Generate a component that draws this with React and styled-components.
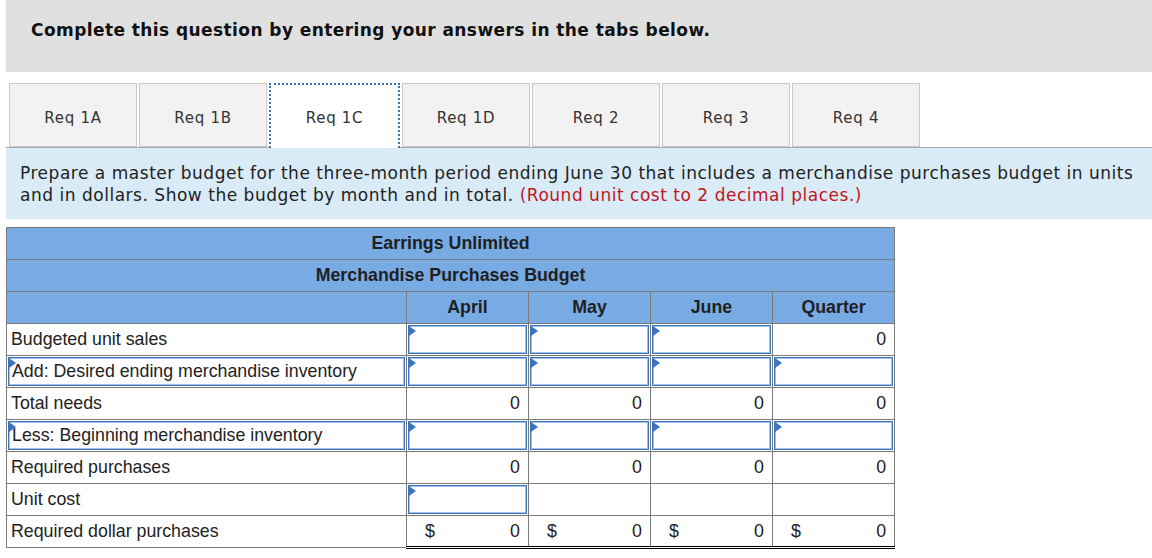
import React from "react";
import styled, { createGlobalStyle } from "styled-components";

const Global = createGlobalStyle`
  html, body { margin: 0; padding: 0; background: #fff; }
  body { font-family: "DejaVu Sans", Verdana, sans-serif; }
`;

const Page = styled.div`
  padding-left: 6px;
  width: 1146px;
`;

const TopBar = styled.div`
  height: 72px;
  background: #e0e0e0;
  display: flex;
  align-items: flex-start;
  padding: 19px 0 0 25px;
  box-sizing: border-box;
`;

const TopTitle = styled.h1`
  margin: 0;
  font-family: "DejaVu Sans", Verdana, sans-serif;
  font-weight: bold;
  font-size: 17px;
  line-height: 22px;
  color: #111;
  letter-spacing: 0.42px;
`;

const TabRow = styled.div`
  margin-top: 11px;
  display: flex;
  align-items: flex-end;
  gap: 2px;
  padding-left: 3px;
  border-bottom: 1px solid #a8a8a8;
  height: 64px;
`;

const Tab = styled.div`
  width: ${(p) => (p.$active ? 131 : 128)}px;
  height: ${(p) => (p.$active ? 65 : 64)}px;
  margin-bottom: ${(p) => (p.$active ? -1 : 0)}px;
  box-sizing: border-box;
  display: flex;
  align-items: center;
  justify-content: center;
  font-family: "DejaVu Sans", Verdana, sans-serif;
  font-size: 15px;
  letter-spacing: 0.7px;
  color: #333;
  background: ${(p) => (p.$active ? "#fff" : "#f2f2f2")};
  border: ${(p) => (p.$active ? "2px dotted #3d73c0" : "1px solid #c9c9c9")};
  border-bottom: ${(p) => (p.$active ? "none" : "1px solid #c9c9c9")};
  padding-top: ${(p) => (p.$active ? 3 : 5)}px;
`;

const Instructions = styled.div`
  background: #daebf8;
  padding: 14px 8px 13px 14px;
  font-family: "DejaVu Sans", Verdana, sans-serif;
  font-size: 17px;
  line-height: 22px;
  color: #222;
  letter-spacing: 0.52px;
  white-space: nowrap;
`;

const Red = styled.span`
  color: #c0161c;
`;

const Table = styled.table`
  margin-top: 8px;
  border-collapse: collapse;
  table-layout: fixed;
  width: 888px;
  font-family: "Liberation Sans", Arial, sans-serif;
  font-size: 17.8px;
  color: #222;
`;

const Row = styled.tr`
  height: 32px;
`;

const HeadCell = styled.th`
  background: #78abe4;
  border: 1px solid #7a7a7a;
  padding: 0;
  font-weight: bold;
  text-align: center;
  color: #1f1f1f;
`;

const LabelCell = styled.td`
  border: 1px solid #7a7a7a;
  padding: ${(p) => (p.$input ? "1px" : "0 0 0 4px")};
  box-sizing: border-box;
  white-space: nowrap;
`;

const ValueCell = styled.td`
  border: 1px solid #7a7a7a;
  border-top: ${(p) => (p.$total ? "1px solid #000" : "1px solid #7a7a7a")};
  border-bottom: ${(p) => (p.$double ? "3px double #000" : "1px solid #7a7a7a")};
  padding: ${(p) => (p.$input ? "1px" : "0 8px 0 18px")};
  box-sizing: border-box;
`;

const InputBox = styled.div`
  position: relative;
  height: 29px;
  box-sizing: border-box;
  border: 1px solid #3f75b8;
  box-shadow: inset 0 0 0 1px #a4c2e8;
  background: #fff;
  display: flex;
  align-items: center;
  padding-left: 3px;
`;

const Flag = styled.span`
  position: absolute;
  left: 0;
  top: 0;
  width: 0;
  height: 0;
  border-top: 5px solid transparent;
  border-bottom: 5px solid transparent;
  border-left: 7px solid #3a74c4;
`;

const Amount = styled.div`
  display: flex;
  justify-content: ${(p) => (p.$dollar ? "space-between" : "flex-end")};
  align-items: center;
`;

const months = ["April", "May", "June", "Quarter"];

const rows = [
  { label: "Budgeted unit sales", cells: ["in", "in", "in", "zero"] },
  { label: "Add: Desired ending merchandise inventory", labelInput: true, cells: ["in", "in", "in", "in"] },
  { label: "Total needs", total: true, cells: ["zero", "zero", "zero", "zero"] },
  { label: "Less: Beginning merchandise inventory", labelInput: true, cells: ["in", "in", "in", "in"] },
  { label: "Required purchases", total: true, cells: ["zero", "zero", "zero", "zero"] },
  { label: "Unit cost", cells: ["in", "blank", "blank", "blank"] },
  { label: "Required dollar purchases", total: true, double: true, cells: ["dollar", "dollar", "dollar", "dollar"] },
];

function Input({ children }) {
  return (
    <InputBox>
      <Flag />
      {children}
    </InputBox>
  );
}

export default function App() {
  const tabs = ["Req 1A", "Req 1B", "Req 1C", "Req 1D", "Req 2", "Req 3", "Req 4"];
  return (
    <Page>
      <Global />
      <TopBar>
        <TopTitle>Complete this question by entering your answers in the tabs below.</TopTitle>
      </TopBar>
      <TabRow>
        {tabs.map((t) => (
          <Tab key={t} $active={t === "Req 1C"}>{t}</Tab>
        ))}
      </TabRow>
      <Instructions>
        Prepare a master budget for the three-month period ending June 30 that includes a merchandise purchases budget in units
        <br />
        and in dollars. Show the budget by month and in total. <Red>(Round unit cost to 2 decimal places.)</Red>
      </Instructions>
      <Table>
        <colgroup>
          <col style={{ width: 400 }} />
          <col style={{ width: 122 }} />
          <col style={{ width: 122 }} />
          <col style={{ width: 122 }} />
          <col style={{ width: 122 }} />
        </colgroup>
        <thead>
          <Row>
            <HeadCell colSpan={5}>Earrings Unlimited</HeadCell>
          </Row>
          <Row>
            <HeadCell colSpan={5}>Merchandise Purchases Budget</HeadCell>
          </Row>
          <Row>
            <HeadCell />
            {months.map((m) => (
              <HeadCell key={m}>{m}</HeadCell>
            ))}
          </Row>
        </thead>
        <tbody>
          {rows.map((r) => (
            <Row key={r.label}>
              <LabelCell $input={r.labelInput}>
                {r.labelInput ? <Input>{r.label}</Input> : r.label}
              </LabelCell>
              {r.cells.map((c, i) => (
                <ValueCell key={i} $input={c === "in"} $total={r.total} $double={r.double}>
                  {c === "in" && <Input />}
                  {c === "zero" && <Amount>0</Amount>}
                  {c === "dollar" && (
                    <Amount $dollar>
                      <span>$</span>
                      <span>0</span>
                    </Amount>
                  )}
                </ValueCell>
              ))}
            </Row>
          ))}
        </tbody>
      </Table>
    </Page>
  );
}
